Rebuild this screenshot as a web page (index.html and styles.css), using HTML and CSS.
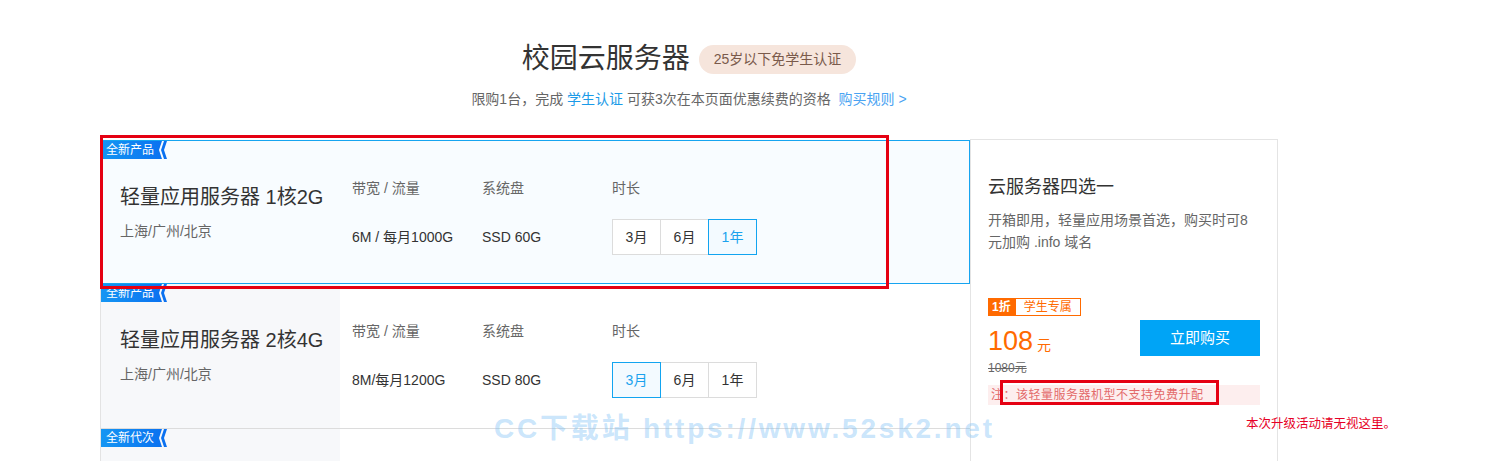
FILE: index.html
```html
<!DOCTYPE html>
<html lang="zh-CN">
<head>
<meta charset="utf-8">
<title>校园云服务器</title>
<link rel="stylesheet" href="styles.css">
</head>
<body>
<div class="page">
  <header class="hero">
    <div class="title-row">
      <h1 class="title">校园云服务器</h1>
      <span class="badge">25岁以下免学生认证</span>
    </div>
    <p class="sub">限购1台，完成 <a class="link">学生认证</a> 可获3次在本页面优惠续费的资格 &nbsp;<a class="rule">购买规则 &gt;</a></p>
  </header>

  <div class="main">
    <div class="list">
      <div class="card card-active">
        <span class="tag">全新产品</span>
        <div class="info">
          <div class="name">轻量应用服务器 1核2G</div>
          <div class="region">上海/广州/北京</div>
        </div>
        <div class="spec">
          <div class="label">带宽 / 流量</div>
          <div class="value">6M / 每月1000G</div>
        </div>
        <div class="spec">
          <div class="label">系统盘</div>
          <div class="value">SSD 60G</div>
        </div>
        <div class="spec">
          <div class="label">时长</div>
          <div class="dur">
            <span class="opt">3月</span><span class="opt">6月</span><span class="opt on">1年</span>
          </div>
        </div>
      </div>

      <div class="card">
        <span class="tag">全新产品</span>
        <div class="info">
          <div class="name">轻量应用服务器 2核4G</div>
          <div class="region">上海/广州/北京</div>
        </div>
        <div class="spec">
          <div class="label">带宽 / 流量</div>
          <div class="value">8M/每月1200G</div>
        </div>
        <div class="spec">
          <div class="label">系统盘</div>
          <div class="value">SSD 80G</div>
        </div>
        <div class="spec">
          <div class="label">时长</div>
          <div class="dur">
            <span class="opt on">3月</span><span class="opt">6月</span><span class="opt">1年</span>
          </div>
        </div>
      </div>

      <div class="card">
        <span class="tag">全新代次</span>
        <div class="info"></div>
        <div class="spec"></div>
        <div class="spec"></div>
        <div class="spec"></div>
      </div>
    </div>

    <aside class="panel">
      <h2 class="p-title">云服务器四选一</h2>
      <p class="p-desc">开箱即用，轻量应用场景首选，购买时可8元加购 .info 域名</p>
      <div class="buy">
        <div class="buy-left">
          <div class="ptags"><span class="t1">1折</span><span class="t2">学生专属</span></div>
          <div class="price"><span class="num">108</span><span class="unit">元</span></div>
          <div class="old">1080元</div>
        </div>
        <a class="btn">立即购买</a>
      </div>
      <div class="note">注：该轻量服务器机型不支持免费升配</div>
    </aside>
  </div>

  <div class="mark mark-card"></div>
  <div class="mark mark-note"></div>
  <div class="remark">本次升级活动请无视这里。</div>
  <div class="watermark">CC下载站 https://www.52sk2.net</div>
</div>
</body>
</html>
```

FILE: styles.css
```css
html, body {
  margin: 0;
  padding: 0;
  overflow: hidden;
  background: #fff;
}
body {
  font-family: "Liberation Sans", "Noto Sans CJK SC", sans-serif;
  color: #333;
}
.page {
  position: relative;
  width: 1178px;
  margin-left: 100px;
}
.hero {
  padding-top: 39px;
  text-align: center;
}
.title-row {
  display: flex;
  justify-content: center;
  align-items: center;
  gap: 9px;
  height: 40px;
}
.title {
  margin: 0;
  font-size: 28px;
  font-weight: normal;
  line-height: 40px;
  color: #333;
}
.badge {
  height: 29px;
  line-height: 29px;
  padding: 0 15px;
  border-radius: 15px;
  background: #f6e5dc;
  color: #7a5a4b;
  font-size: 14px;
}
.sub {
  margin: 10px 0 0;
  font-size: 14px;
  line-height: 20px;
  color: #666;
}
.link { color: #1a9be8; }
.rule { color: #4aa3f2; }

.main {
  display: flex;
  margin-top: 31px;
}
.list {
  width: 870px;
}
.card {
  position: relative;
  display: grid;
  grid-template-columns: 239px 130px 130px 1fr;
  height: 145px;
  box-sizing: border-box;
  border-left: 1px solid #e3e3e3;
  border-bottom: 1px solid #dcdcdc;
  background: #fff;
}
.card .info {
  background: #f7f8fa;
}
.card-active {
  height: 144px;
  border: 1px solid #16a4f0;
  background: #f8fcff;
}
.card-active .info {
  background: transparent;
}
.tag {
  position: absolute;
  left: 0;
  top: 0;
  z-index: 2;
  width: 66px;
  height: 18px;
  box-sizing: border-box;
  padding-left: 5px;
  line-height: 18px;
  font-size: 12px;
  color: #fff;
  background: linear-gradient(90deg, #1596f3, #0a6ff0);
  clip-path: path("M0 0 H61 L58 9 L61 18 H0 Z M63 0 H66 L63 9 L66 18 H63 L60 9 Z");
}
.info {
  padding: 42px 0 0 19px;
}
.name {
  font-size: 20px;
  line-height: 28px;
  color: #333;
}
.region {
  margin-top: 10px;
  font-size: 14px;
  line-height: 20px;
  color: #666;
}
.spec {
  padding: 37px 0 0 12px;
}
.label {
  font-size: 14px;
  line-height: 20px;
  color: #666;
  margin-bottom: 21px;
}
.value {
  font-size: 14px;
  line-height: 36px;
  color: #333;
}
.dur {
  display: flex;
}
.opt {
  position: relative;
  width: 49px;
  height: 36px;
  box-sizing: border-box;
  border: 1px solid #dcdcdc;
  background: #fff;
  text-align: center;
  line-height: 34px;
  font-size: 14px;
  color: #333;
}
.opt + .opt {
  margin-left: -1px;
}
.opt.on {
  z-index: 1;
  border-color: #12a4f0;
  background: #f3faff;
  color: #1aa2ee;
}

.panel {
  width: 308px;
  height: 340px;
  box-sizing: border-box;
  margin-top: -1px;
  border: 1px solid #e4e4e4;
  padding: 34px 17px 0;
  background: #fff;
}
.p-title {
  margin: 0;
  font-size: 18px;
  font-weight: normal;
  line-height: 26px;
  color: #333;
}
.p-desc {
  margin: 9px 0 0;
  font-size: 14px;
  line-height: 22px;
  color: #666;
}
.buy {
  display: flex;
  justify-content: space-between;
  align-items: flex-start;
  margin-top: 45px;
}
.ptags {
  display: flex;
  height: 18px;
}
.t1 {
  padding: 0 4px;
  background: #ff6a00;
  color: #fff;
  font-size: 12px;
  font-weight: bold;
  line-height: 18px;
}
.t2 {
  padding: 0 8px;
  border: 1px solid #ff6a00;
  color: #ff6a00;
  font-size: 12px;
  line-height: 16px;
}
.price {
  margin-top: 7px;
  height: 36px;
  line-height: 36px;
  color: #ff6a00;
}
.num {
  font-size: 27px;
}
.unit {
  margin-left: 4px;
  font-size: 14px;
}
.old {
  height: 18px;
  font-size: 12px;
  line-height: 18px;
  color: #666;
  text-decoration: line-through;
}
.btn {
  margin-top: 22px;
  width: 120px;
  height: 36px;
  line-height: 36px;
  text-align: center;
  background: #00a4f6;
  color: #fff;
  font-size: 15px;
}
.note {
  margin-top: 8px;
  height: 20px;
  line-height: 20px;
  padding-left: 3px;
  background: #fdeeee;
  color: #e36a6a;
  font-size: 12px;
  letter-spacing: 0.5px;
  white-space: nowrap;
}

.mark {
  position: absolute;
  box-sizing: border-box;
  border: 3px solid #e50012;
  z-index: 5;
}
.mark-card {
  left: 0;
  top: 135px;
  width: 789px;
  height: 154px;
}
.mark-note {
  left: 900px;
  top: 380px;
  width: 219px;
  height: 25px;
}
.remark {
  position: absolute;
  left: 1146px;
  top: 414px;
  font-size: 12.5px;
  line-height: 20px;
  color: #e60026;
  white-space: nowrap;
}
.watermark {
  position: absolute;
  left: 394px;
  top: 411px;
  z-index: 6;
  font-size: 28px;
  font-weight: bold;
  line-height: 36px;
  letter-spacing: 2.8px;
  color: rgba(120, 190, 245, 0.4);
  white-space: nowrap;
  pointer-events: none;
}
```
